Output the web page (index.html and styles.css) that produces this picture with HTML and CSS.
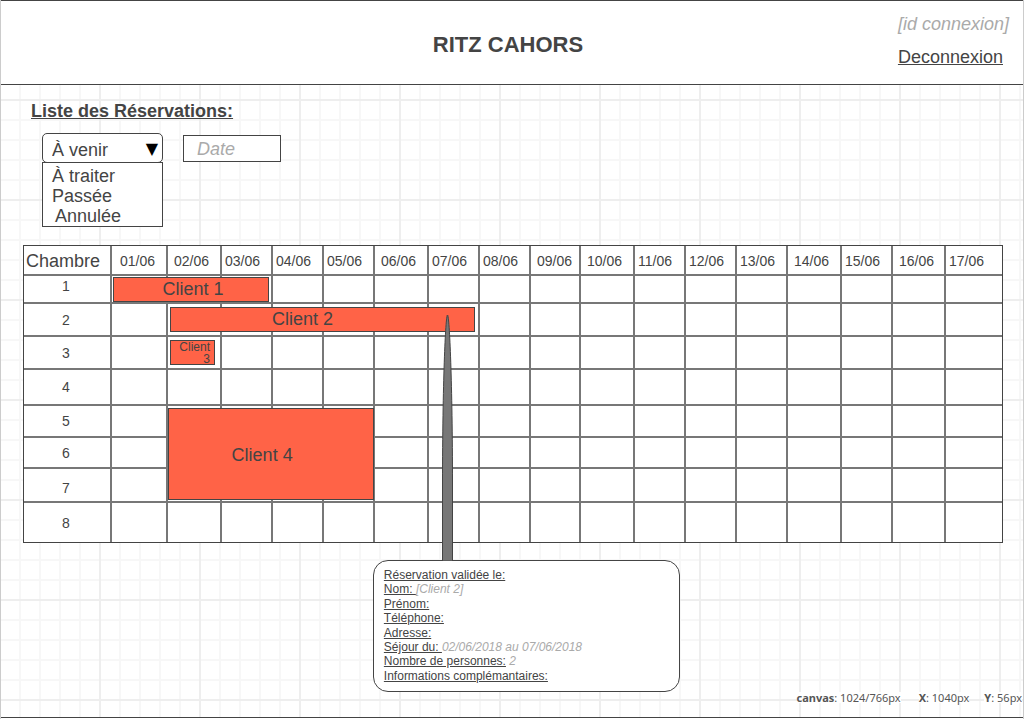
FILE: index.html
```
<!DOCTYPE html>
<html lang="fr">
<head>
<meta charset="utf-8">
<title>Ritz Cahors - Réservations</title>
<link rel="stylesheet" href="styles.css">
</head>
<body>
<header class="topbar">
  <h1 class="brand">RITZ CAHORS</h1>
  <div class="session">
    <span class="muted">[id connexion]</span>
    <a class="logout" href="#">Deconnexion</a>
  </div>
</header>
<main class="page">
  <h2 class="heading">Liste des Réservations:</h2>
  <form class="filters">
    <div class="dropdown">
      <select class="status" aria-label="Statut"><option>À venir</option><option>À traiter</option><option>Passée</option><option>Annulée</option></select>
      <span class="arrow" aria-hidden="true">▼</span>
      <div class="menu">
        <button type="button" class="choice">À traiter</button>
        <button type="button" class="choice">Passée</button>
        <button type="button" class="choice indent">Annulée</button>
      </div>
    </div>
    <input class="date" type="text" placeholder="Date" aria-label="Date">
  </form>
  <section class="planning">
    <table class="rooms">
      <colgroup>
        <col class="w88"><col class="w56"><col class="w54"><col class="w51"><col class="w51"><col class="w51"><col class="w54"><col class="w51"><col class="w51"><col class="w50"><col class="w54"><col class="w51"><col class="w51"><col class="w51"><col class="w54"><col class="w51"><col class="w53"><col class="w56">
      </colgroup>
      <thead>
        <tr class="h30"><th class="room-head">Chambre</th><th class="wide">01/06</th><th class="mid">02/06</th><th>03/06</th><th>04/06</th><th>05/06</th><th class="mid">06/06</th><th>07/06</th><th>08/06</th><th class="mid">09/06</th><th class="mid">10/06</th><th>11/06</th><th>12/06</th><th>13/06</th><th class="mid">14/06</th><th>15/06</th><th class="mid">16/06</th><th>17/06</th></tr>
      </thead>
      <tbody>
        <tr class="h28"><td class="raised">1</td><td></td><td></td><td></td><td></td><td></td><td></td><td></td><td></td><td></td><td></td><td></td><td></td><td></td><td></td><td></td><td></td><td></td></tr>
        <tr class="h33"><td>2</td><td></td><td></td><td></td><td></td><td></td><td></td><td></td><td></td><td></td><td></td><td></td><td></td><td></td><td></td><td></td><td></td><td></td></tr>
        <tr class="h33"><td>3</td><td></td><td></td><td></td><td></td><td></td><td></td><td></td><td></td><td></td><td></td><td></td><td></td><td></td><td></td><td></td><td></td><td></td></tr>
        <tr class="h36"><td>4</td><td></td><td></td><td></td><td></td><td></td><td></td><td></td><td></td><td></td><td></td><td></td><td></td><td></td><td></td><td></td><td></td><td></td></tr>
        <tr class="h32"><td>5</td><td></td><td></td><td></td><td></td><td></td><td></td><td></td><td></td><td></td><td></td><td></td><td></td><td></td><td></td><td></td><td></td><td></td></tr>
        <tr class="h31"><td>6</td><td></td><td></td><td></td><td></td><td></td><td></td><td></td><td></td><td></td><td></td><td></td><td></td><td></td><td></td><td></td><td></td><td></td></tr>
        <tr class="h34"><td class="lowered">7</td><td></td><td></td><td></td><td></td><td></td><td></td><td></td><td></td><td></td><td></td><td></td><td></td><td></td><td></td><td></td><td></td><td></td></tr>
        <tr class="h39"><td>8</td><td></td><td></td><td></td><td></td><td></td><td></td><td></td><td></td><td></td><td></td><td></td><td></td><td></td><td></td><td></td><td></td><td></td></tr>
      </tbody>
    </table>
    <div class="booking client1">Client 1</div>
    <div class="booking client2">Client 2</div>
    <div class="booking client3">Client 3</div>
    <div class="booking client4">Client 4</div>
  </section>
  <aside class="details">
    <svg class="pointer" viewBox="0 0 12 246" aria-hidden="true"><path d="M.5 246V168C.5 70 3.500 0 5.500 0S10.500 70 10.500 168V246Z" fill="#777" stroke="#444"/></svg>
    <div><u>Réservation validée le:</u></div>
    <div><u>Nom: </u><em>[Client 2]</em></div>
    <div><u>Prénom:</u></div>
    <div><u>Téléphone:</u></div>
    <div><u>Adresse:</u></div>
    <div><u>Séjour du: </u><em>02/06/2018 au 07/06/2018</em></div>
    <div><u>Nombre de personnes:</u> <em>2</em></div>
    <div><u>Informations complémantaires:</u></div>
  </aside>
</main>
<footer class="canvas-info">
  <span class="size"><b>canvas</b>: 1024/766px</span>
  <span><b>X</b>: 1040px</span>
  <span><b>Y</b>: 56px</span>
</footer>
<div class="next-frame"></div>
</body>
</html>
```
FILE: styles.css
```
* { box-sizing: border-box; }

body {
  margin: 0;
  color: #444;
  font: 18px/24px "Liberation Sans", Arial, sans-serif;
  background-color: #fff;
  background-image:
    linear-gradient(90deg, transparent 98px, #eee 98px),
    linear-gradient(transparent 98px, #eee 98px),
    linear-gradient(90deg, transparent 18px, #f7f7f7 18px),
    linear-gradient(transparent 18px, #f7f7f7 18px);
  background-size: 100px 100px, 100px 100px, 20px 20px, 20px 20px;
  background-position: 1px 1px;
  border-left: 1px solid #ccc;
  border-right: 1px solid #ccc;
}

.topbar {
  position: relative;
  display: grid;
  grid-template-columns: 1fr auto 1fr;
  align-items: center;
  margin: 0 -1px;
  padding: 11px 13px 15px 5px;
  background: #fff;
  border: 1px solid #444;
}

.brand {
  grid-column: 2;
  margin: 0;
  padding-top: 8px;
  font-size: 22px;
  line-height: 24px;
}

.session {
  display: grid;
  gap: 9px;
  justify-self: end;
  padding-right: 1px;
}

.muted, em { color: #aaa; font-style: italic; }
.logout { color: #444; }

.page { padding: 14px 20px 0 22px; }

.heading {
  margin: 0 8px;
  font-size: 18px;
  line-height: 24px;
  text-decoration: underline;
}

.filters {
  display: flex;
  align-items: center;
  gap: 20px;
  height: 30px;
  margin: 10px 19px 82px;
}

.dropdown { position: relative; width: 121px; }

.status {
  display: block;
  width: 100%;
  height: 30px;
  padding: 3px 9px 0;
  appearance: none;
  color: #444;
  font: inherit;
  background: #fff;
  border: 1px solid #444;
  border-radius: 5px;
}

.arrow {
  position: absolute;
  top: 4px;
  right: 5px;
  color: #000;
  font-family: "DejaVu Sans", sans-serif;
  font-size: 16px;
  pointer-events: none;
}

.menu {
  position: absolute;
  top: 29px;
  left: 0;
  width: 100%;
  padding: 3px 9px 0;
  height: 65px;
  background: #fff;
  border: 1px solid #444;
}

.choice {
  display: block;
  padding: 0;
  color: #444;
  font: 18px/20px "Liberation Sans", Arial, sans-serif;
  background: none;
  border: 0;
}

.choice.indent { padding-left: 3px; }

.date {
  width: 98px;
  height: 27px;
  padding: 2px 13px 0;
  font: inherit;
  font-style: italic;
  background: #fff;
  border: 1px solid #444;
  border-radius: 0;
}

.date::placeholder { color: #aaa; opacity: 1; }

.planning {
  position: relative;
  background: #fff;
  border: 1px solid #444;
}

.rooms {
  width: 100%;
  table-layout: fixed;
  border-collapse: separate;
  border-spacing: 0;
  font-size: 14px;
  line-height: 18px;
}

.rooms th, .rooms td {
  padding: 0;
  border-right: 2px solid #777;
  border-bottom: 2px solid #777;
}

.rooms th { padding: 1px 0 0 3px; font-weight: normal; text-align: left; }
.rooms td { padding-right: 2px; text-align: center; }
.rooms th:last-child, .rooms td:last-child { border-right: 0; }
.rooms tr:last-child td { border-bottom: 0; }
.rooms .raised { padding-bottom: 6px; }
.rooms .lowered { padding-top: 6px; }
.rooms .room-head { padding-left: 2px; font-size: 18px; }
.rooms .mid { padding-left: 6px; }
.rooms .wide { padding-left: 8px; }

.w88 { width: 88px; }
.w56 { width: 56px; }
.w54 { width: 54px; }
.w53 { width: 53px; }
.w51 { width: 51px; }
.w50 { width: 50px; }
.h28 { height: 28px; }
.h30 { height: 30px; }
.h31 { height: 31px; }
.h32 { height: 32px; }
.h33 { height: 33px; }
.h34 { height: 34px; }
.h36 { height: 36px; }
.h39 { height: 39px; }

.booking {
  position: absolute;
  height: 25px;
  line-height: 23px;
  text-align: center;
  background: #ff6347;
  border: 1px solid #444;
}

.client1 { top: 31px; left: 9.1%; width: 15.95%; padding-left: 4px; }
.client2 { top: 61px; left: 14.93%; width: 31.19%; padding-right: 40px; }
.client3 {
  top: 94px;
  left: 14.93%;
  width: 4.6%;
  padding-right: 4px;
  font-size: 12px;
  line-height: 12px;
  text-align: right;
}
.client4 {
  top: 162px;
  left: 14.72%;
  width: 21.1%;
  height: 92px;
  padding-right: 18px;
  line-height: 92px;
}

.details {
  position: relative;
  width: 307px;
  margin: 17px 0 0 35.7%;
  padding: 7px 10px 8px;
  font-size: 12px;
  line-height: 1.2;
  background: #fff;
  border: 1px solid #444;
  border-radius: 15px;
}

.pointer {
  position: absolute;
  bottom: 100%;
  left: 68px;
  width: 12px;
  height: 246px;
}

.canvas-info {
  display: flex;
  justify-content: flex-end;
  gap: 15px;
  height: 25px;
  padding-right: 1px;
  color: #555;
  font: 11px/11px "Noto Sans", sans-serif;
}

.canvas-info span { height: 11px; background: #fff; }
.canvas-info .size { margin-right: 3px; }

.next-frame {
  height: 2px;
  margin: 0 -1px;
  background: #fff;
  border-top: 1px solid #444;
  border-left: 1px solid #444;
}
```
